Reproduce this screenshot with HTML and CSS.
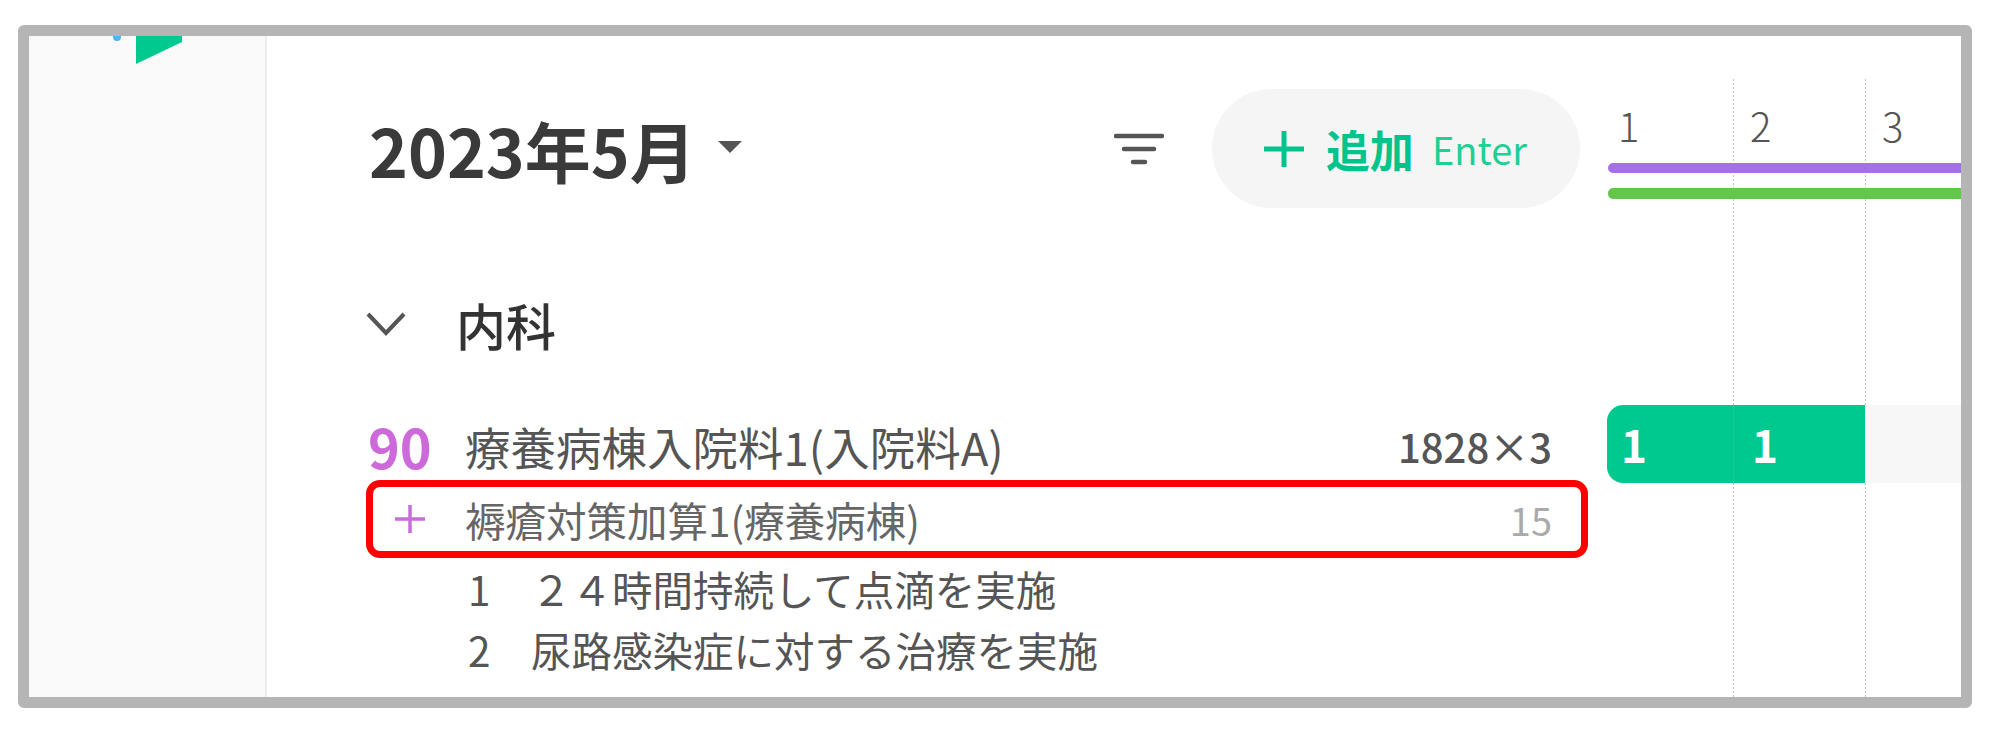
FILE: index.html
```html
<!DOCTYPE html>
<html lang="ja">
<head>
  <meta charset="UTF-8" />
  <meta name="viewport" content="width=device-width, initial-scale=1.0"/>
  <title>算定カレンダー</title>
  <link rel="stylesheet" href="styles.css">
</head>
<body>

  <div class="frame">
    <aside class="sidebar">
      <svg class="logo" width="236" height="40" viewBox="0 0 236 40">
        <circle cx="88" cy="1" r="4" fill="#4db5f2"/>
        <polygon points="107,0 153,0 153,6 107,28" fill="#00c98f"/>
      </svg>
    </aside>

    <main class="main">
      <section class="list">
        <div class="toolbar">
          <div class="month">
            <h1>2023年5月</h1>
            <svg class="caret" width="24" height="12" viewBox="0 0 24 12"><polygon points="0,0 24,0 12,12" fill="#555"/></svg>
          </div>
          <div class="actions">
            <svg class="filter" width="50" height="32" viewBox="0 0 50 32">
              <g stroke="#555" stroke-width="4.5" stroke-linecap="round">
                <line x1="2" y1="3" x2="48" y2="3"/>
                <line x1="10" y1="16" x2="40" y2="16"/>
                <line x1="19" y1="29" x2="31" y2="29"/>
              </g>
            </svg>
            <button class="add-btn">
              <svg width="40" height="40" viewBox="0 0 40 40"><g stroke="#00c48c" stroke-width="5"><line x1="0" y1="20" x2="40" y2="20"/><line x1="20" y1="2" x2="20" y2="38"/></g></svg>
              <span class="add-label">追加</span>
              <span class="add-key">Enter</span>
            </button>
          </div>
        </div>

        <div class="group-head">
          <svg width="40" height="26" viewBox="0 0 40 26"><polyline points="2,3 20,22 38,3" fill="none" stroke="#555" stroke-width="4"/></svg>
          <h2>内科</h2>
        </div>

        <div class="row row-main">
          <span class="num">90</span>
          <span class="name">療養病棟入院料1(入院料A)</span>
          <span class="amount">1828×3</span>
        </div>
        <div class="row row-add marked">
          <span class="num">
            <svg width="30" height="30" viewBox="0 0 30 30"><g stroke="#c86ed8" stroke-width="3.5"><line x1="0" y1="15" x2="30" y2="15"/><line x1="15" y1="1" x2="15" y2="29"/></g></svg>
          </span>
          <span class="name">褥瘡対策加算1(療養病棟)</span>
          <span class="amount light">15</span>
        </div>
        <div class="row row-note">
          <span class="num"></span>
          <span class="name">1　２４時間持続して点滴を実施</span>
        </div>
        <div class="row row-note">
          <span class="num"></span>
          <span class="name">2　尿路感染症に対する治療を実施</span>
        </div>
      </section>

      <section class="gantt">
        <div class="days">
          <span>1</span>
          <span>2</span>
          <span>3</span>
        </div>
        <div class="track purple"></div>
        <div class="track green"></div>
        <div class="bar-row">
          <div class="cell on first">1</div>
          <div class="cell on">1</div>
          <div class="cell"></div>
        </div>
      </section>
    </main>
  </div>

</body>
</html>
```

FILE: styles.css
```css
body {
  margin: 0;
  background: #fff;
  font-family: "Noto Sans CJK JP", "Noto Sans", sans-serif;
  color: #383838;
}

.frame {
  box-sizing: border-box;
  width: 1954px;
  height: 683px;
  margin: 25px 0 0 18px;
  border: 11px solid #b5b5b5;
  border-radius: 6px;
  display: flex;
  overflow: hidden;
}

.sidebar {
  width: 236px;
  flex: none;
  background: #f9f9f9;
  border-right: 2px solid #ececec;
}

.logo {
  display: block;
}

.main {
  flex: 1;
  display: flex;
  min-width: 0;
}

/* left list */

.list {
  width: 1335px;
  flex: none;
  box-sizing: border-box;
  padding: 53px 14px 0 99px;
}

.toolbar {
  height: 119px;
  display: flex;
  align-items: center;
  justify-content: space-between;
  margin-right: 8px;
}

.month {
  display: flex;
  align-items: center;
  gap: 22px;
}

.month h1 {
  margin: 0 0 0 3px;
  font-size: 66px;
  font-weight: 600;
  line-height: 1;
  color: #3a3a3a;
}

.caret {
  margin-top: -4px;
}

.actions {
  display: flex;
  align-items: center;
  gap: 48px;
  height: 100%;
}

.add-btn {
  height: 119px;
  padding: 0 53px 0 52px;
  border: none;
  border-radius: 60px;
  background: #f5f5f5;
  display: flex;
  align-items: center;
  font-family: inherit;
  color: #00c48c;
  cursor: pointer;
}

.add-btn svg {
  margin-right: 22px;
}

.add-label {
  font-size: 44px;
  font-weight: 700;
  margin-right: 18px;
}

.add-key {
  font-size: 38px;
  font-weight: 400;
  color: #1fcf94;
}

.group-head {
  height: 60px;
  margin: 86px 0 58px;
  display: flex;
  align-items: center;
  gap: 50px;
}

.group-head h2 {
  margin: 0;
  font-size: 50px;
  font-weight: 500;
  color: #333;
}

.row {
  display: flex;
  align-items: center;
  box-sizing: border-box;
  padding: 0 36px 0 2px;
  border-radius: 14px;
}

.row .num {
  width: 97px;
  flex: none;
}

.row .name {
  flex: 1;
}

.row-main {
  height: 68px;
}

.row-main .num {
  font-size: 54px;
  font-weight: 700;
  color: #cc6ad9;
  line-height: 1;
}

.row-main .name {
  font-size: 45.5px;
  color: #555;
}

.amount {
  font-size: 40px;
  font-weight: 500;
  color: #555;
}

.amount.light {
  font-size: 38px;
  font-weight: 400;
  color: #aaa;
}

.row-add {
  height: 78px;
}

.row-add .num svg {
  display: block;
  margin-left: 27px;
}

.row-add .name {
  font-size: 40.5px;
  color: #666;
}

.marked {
  outline: 7px solid #ff0000;
  outline-offset: -7px;
}

.row-note {
  height: 61px;
}

.row-note .name {
  font-size: 40.5px;
  color: #555;
  padding-left: 3px;
}

/* right calendar */

.gantt {
  flex: 1;
  min-width: 0;
  margin-top: 41px;
  padding-top: 23px;
  overflow: hidden;
  background:
    linear-gradient(#fff 50%, transparent 0) 0 0 / 100% 4px,
    linear-gradient(to right, transparent 131px, #c2c2c2 0) 0 0 / 132px 100%;
}

.days {
  display: flex;
  height: 50px;
  align-items: center;
}

.days span {
  width: 132px;
  flex: none;
  box-sizing: border-box;
  padding-left: 16px;
  font-size: 40px;
  font-weight: 300;
  color: #555;
}

.track {
  height: 10px;
  margin-left: 6px;
  border-radius: 5px 0 0 5px;
}

.track.purple {
  margin-top: 13px;
  background: #a370e8;
}

.track.green {
  margin-top: 15px;
  height: 11px;
  background: #64c64b;
}

.bar-row {
  display: flex;
  height: 78px;
  margin-top: 206px;
}

.cell {
  width: 132px;
  flex: none;
  box-sizing: border-box;
  display: flex;
  align-items: center;
  padding-left: 18px;
  font-size: 44px;
  font-weight: 700;
  color: #fff;
  background: #f7f7f7;
}

.cell:last-child {
  flex: 1;
}

.cell.on {
  background: #00c990;
  border-left: 1px solid #14cd98;
}

.cell.first {
  width: 126px;
  margin-left: 5px;
  border-left: none;
  border-radius: 16px 0 0 16px;
  padding-left: 14px;
}
```
